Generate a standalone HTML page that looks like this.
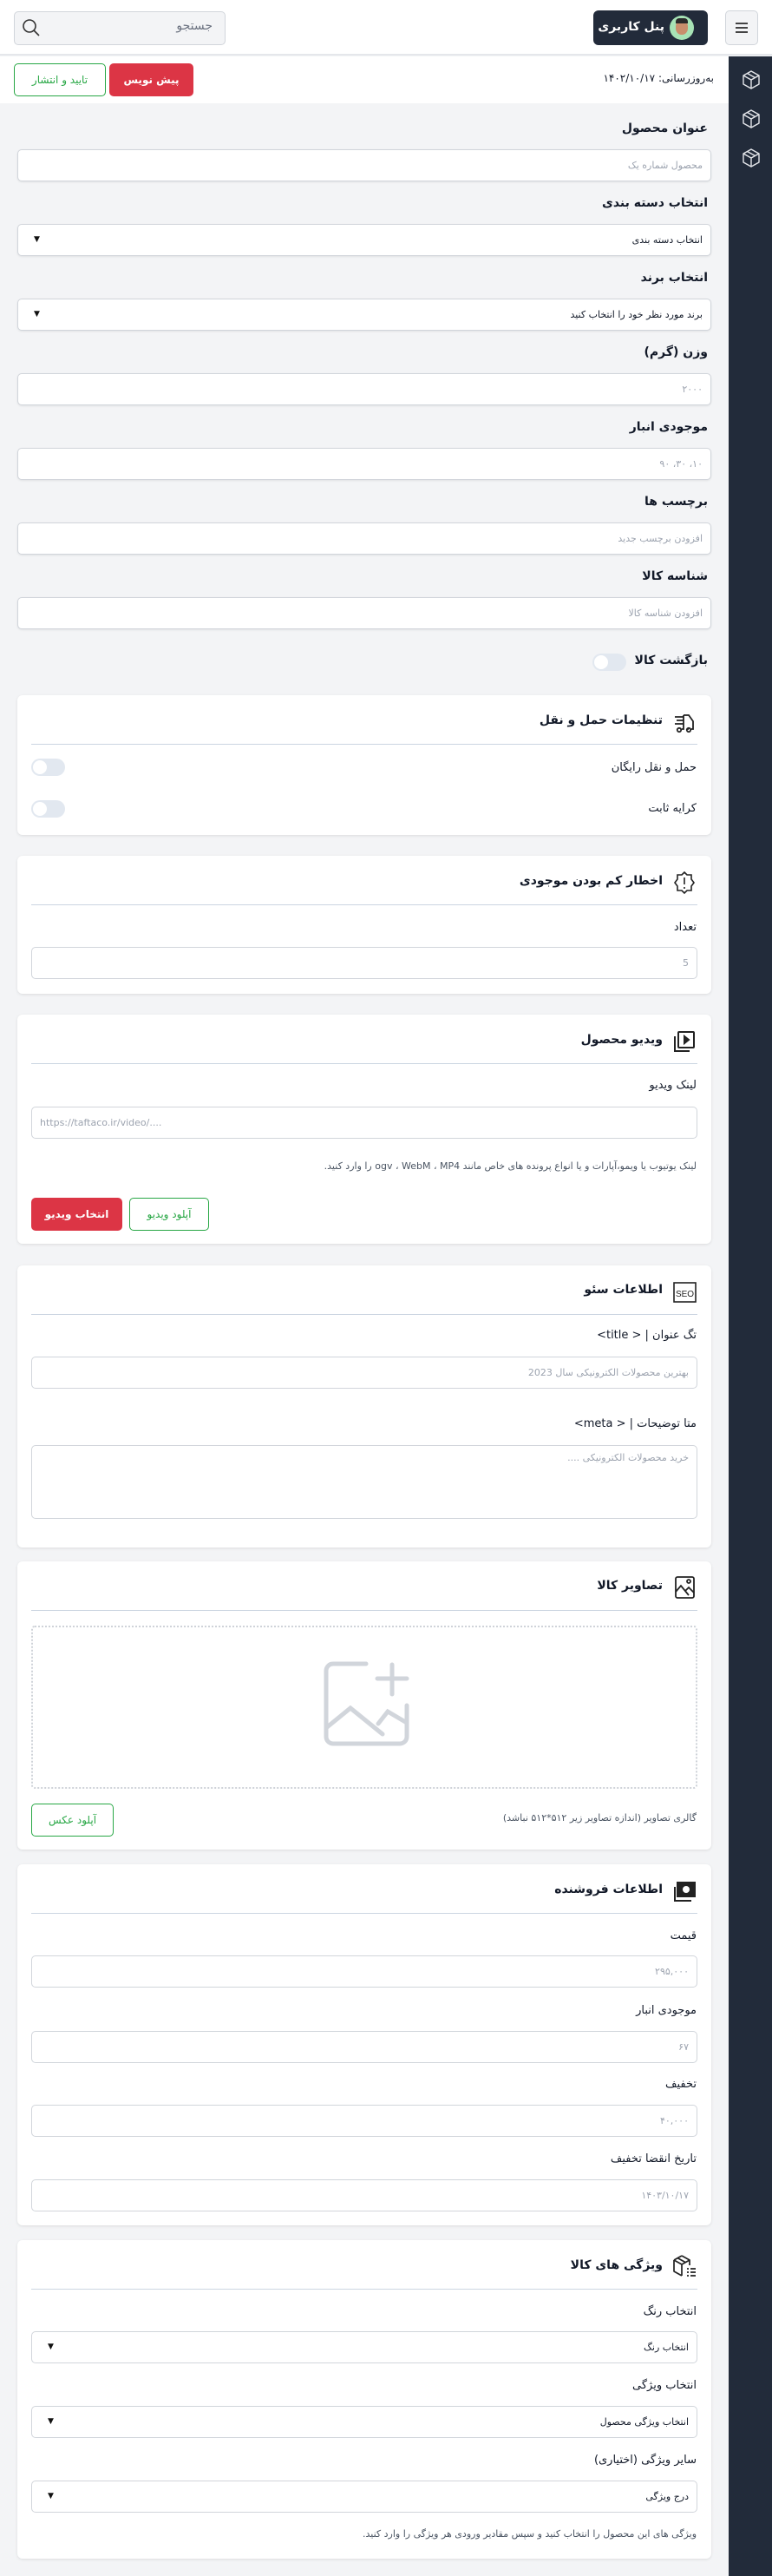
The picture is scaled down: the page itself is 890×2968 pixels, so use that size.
<!DOCTYPE html>
<html lang="fa"><head><meta charset="utf-8">
<style>
*{box-sizing:border-box;margin:0;padding:0}
body{width:890px;height:2968px;position:relative;background:#f3f4f6;font-family:"DejaVu Sans","Liberation Sans",sans-serif;color:#111827;overflow:hidden}
.a{position:absolute}
.hdr{left:0;top:0;width:890px;height:64px;background:#fff;border-bottom:2px solid #e5e7eb}
.side{left:840px;top:65px;width:50px;height:2903px;background:#222b3a}
.bar{left:0;top:65px;width:840px;height:54px;background:#fff}
.lbl{right:74px;font-size:14px;font-weight:bold;direction:rtl;text-align:right;white-space:nowrap}
.lbl2{right:87px;font-size:13px;direction:rtl;text-align:right;white-space:nowrap}
.inp{left:20px;width:800px;height:37px;background:#fff;border:1px solid #d1d5db;border-radius:5px;box-shadow:0 1px 2px rgba(0,0,0,.08);font-size:11px;color:#9ca3af;direction:rtl;padding:0 9px;line-height:35px;text-align:right}
.inp.s{color:#111827}
.inp .ar{position:absolute;left:18px;top:0;font-size:9px;color:#111}
.ci{left:36px;width:768px;height:37px;background:#fff;border:1px solid #d1d5db;border-radius:5px;font-size:11px;color:#9ca3af;direction:rtl;padding:0 9px;line-height:35px;text-align:right}
.ci.s{color:#111827}
.ci .ar{position:absolute;left:18px;top:0;font-size:9px;color:#111}
.card{left:20px;width:800px;background:#fff;border-radius:6px;box-shadow:0 1px 3px rgba(0,0,0,.1)}
.div{left:36px;width:768px;height:1px;background:#cbd5e1}
.ct{right:126px;font-size:14px;font-weight:bold;direction:rtl;white-space:nowrap}
.tg{width:39px;height:20px;border-radius:10px;background:#e2e8f0}
.tg:after{content:"";position:absolute;left:2px;top:2px;width:16px;height:16px;border-radius:50%;background:#fff}
.btnr{background:#dc3545;color:#fff;border-radius:5px;font-size:12px;font-weight:bold;text-align:center;direction:rtl;white-space:nowrap}
.btng{background:#fff;color:#28a745;border:1px solid #28a745;border-radius:5px;font-size:12px;text-align:center;direction:rtl;white-space:nowrap}
.hint{font-size:11px;color:#4b5563;direction:rtl;white-space:nowrap}
.ic{left:774px;width:30px;height:30px}
</style></head><body>
<div class="a hdr"></div>
<div class="a" style="left:16px;top:13px;width:244px;height:39px;background:#f3f4f6;border:1px solid #d1d5db;border-radius:5px"></div>
<svg class="a" style="left:24px;top:20px" width="24" height="24" viewBox="0 0 24 24" fill="none" stroke="#333" stroke-width="1.6"><circle cx="10" cy="10" r="7"/><path d="M15 15l6 6"/></svg>
<div class="a" style="left:150px;top:22px;width:95px;font-size:14px;color:#6b7280;direction:rtl;text-align:right;white-space:nowrap">جستجو</div>
<div class="a" style="left:684px;top:12px;width:132px;height:40px;background:#222b3a;border-radius:6px"></div>
<div class="a" style="left:772px;top:18px;width:28px;height:28px;border-radius:50%;background:#a7e3b5"></div>
<div class="a" style="left:779px;top:23px;width:14px;height:17px;border-radius:45%;background:#c98e6c"></div>
<div class="a" style="left:779px;top:21px;width:14px;height:6px;border-radius:4px 4px 0 0;background:#2b2b2b"></div>
<div class="a" style="right:124px;top:23px;font-size:14px;font-weight:bold;color:#fff;direction:rtl;text-align:right;white-space:nowrap">پنل کاربری</div>
<div class="a" style="left:836px;top:12px;width:38px;height:40px;background:#f3f4f6;border:1px solid #d1d5db;border-radius:5px"></div>
<svg class="a" style="left:845px;top:22px" width="20" height="20" viewBox="0 0 20 20" stroke="#444" stroke-width="2"><path d="M3 5h14M3 10h14M3 15h14"/></svg>

<div class="a bar"></div>
<div class="a side"></div>
<svg class="a" style="left:854px;top:80px" width="24" height="24" viewBox="0 0 24 24" fill="none" stroke="#e5e7eb" stroke-width="1.4" stroke-linejoin="round"><path d="M12 2l9 5v10l-9 5-9-5V7z"/><path d="M3 7l9 5 9-5M12 12v10M7.5 4.5l9 5"/></svg>
<svg class="a" style="left:854px;top:125px" width="24" height="24" viewBox="0 0 24 24" fill="none" stroke="#e5e7eb" stroke-width="1.4" stroke-linejoin="round"><path d="M12 2l9 5v10l-9 5-9-5V7z"/><path d="M3 7l9 5 9-5M12 12v10M7.5 4.5l9 5"/></svg>
<svg class="a" style="left:854px;top:170px" width="24" height="24" viewBox="0 0 24 24" fill="none" stroke="#e5e7eb" stroke-width="1.4" stroke-linejoin="round"><path d="M12 2l9 5v10l-9 5-9-5V7z"/><path d="M3 7l9 5 9-5M12 12v10M7.5 4.5l9 5"/></svg>

<div class="a" style="right:67px;top:83px;font-size:12px;direction:rtl;white-space:nowrap">به‌روزرسانی: ۱۴۰۲/۱۰/۱۷</div>
<div class="a btnr" style="left:126px;top:73px;width:97px;height:38px;line-height:38px">پیش نویس</div>
<div class="a btng" style="left:16px;top:73px;width:106px;height:38px;line-height:36px">تایید و انتشار</div>

<div class="a lbl" style="top:140px">عنوان محصول</div>
<div class="a inp" style="top:172px">محصول شماره یک</div>
<div class="a lbl" style="top:226px">انتخاب دسته بندی</div>
<div class="a inp s" style="top:258px">انتخاب دسته بندی<span class="ar">▼</span></div>
<div class="a lbl" style="top:312px">انتخاب برند</div>
<div class="a inp s" style="top:344px">برند مورد نظر خود را انتخاب کنید<span class="ar">▼</span></div>
<div class="a lbl" style="top:398px">وزن (گرم)</div>
<div class="a inp" style="top:430px">۲۰۰۰</div>
<div class="a lbl" style="top:484px">موجودی انبار</div>
<div class="a inp" style="top:516px">۱۰، ۳۰، ۹۰</div>
<div class="a lbl" style="top:570px">برچسب ها</div>
<div class="a inp" style="top:602px">افزودن برچسب جدید</div>
<div class="a lbl" style="top:656px">شناسه کالا</div>
<div class="a inp" style="top:688px">افزودن شناسه کالا</div>
<div class="a lbl" style="top:753px">بازگشت کالا</div>
<div class="a tg" style="left:683px;top:753px"></div>

<div class="a card" style="top:801px;height:161px"></div>
<svg class="a ic" style="top:818px" viewBox="0 0 30 30" fill="none" stroke="#222" stroke-width="1.8"><path d="M4 8h10M6 12h8M4 16h10M14 6h6l5 7v9h-2M14 6v16h-2M18 22h2"/><circle cx="9" cy="23" r="2.2"/><circle cx="20" cy="23" r="2.2"/></svg>
<div class="a ct" style="top:822px">تنظیمات حمل و نقل</div>
<div class="a div" style="top:857px"></div>
<div class="a lbl2" style="top:877px">حمل و نقل رایگان</div>
<div class="a tg" style="left:36px;top:874px"></div>
<div class="a lbl2" style="top:924px">کرایه ثابت</div>
<div class="a tg" style="left:36px;top:922px"></div>

<div class="a card" style="top:986px;height:159px"></div>
<svg class="a ic" style="top:1002px" viewBox="0 0 30 30" fill="none" stroke="#222" stroke-width="1.6"><path d="M15 3l3 3h5v5l3 4-3 4v5h-5l-3 3-3-3H7v-5l-3-4 3-4V6h5z"/><path d="M15 9v8M15 20v2"/></svg>
<div class="a ct" style="top:1007px">اخطار کم بودن موجودی</div>
<div class="a div" style="top:1042px"></div>
<div class="a lbl2" style="top:1061px">تعداد</div>
<div class="a ci" style="top:1091px">5</div>

<div class="a card" style="top:1169px;height:264px"></div>
<svg class="a ic" style="top:1185px" viewBox="0 0 30 30" fill="none" stroke="#222" stroke-width="2"><rect x="8" y="4" width="18" height="18" rx="1"/><path d="M4 9v17h17"/><path d="M15 9l5 4-5 4z" fill="#222"/></svg>
<div class="a ct" style="top:1190px">ویدیو محصول</div>
<div class="a div" style="top:1225px"></div>
<div class="a lbl2" style="top:1243px">لینک ویدیو</div>
<div class="a ci" style="top:1275px;direction:ltr;text-align:left">https://taftaco.ir/video/....</div>
<div class="a hint" style="right:87px;top:1337px">لینک یوتیوب یا ویمو،آپارات و یا انواع پرونده های خاص مانند ogv ، WebM ، MP4 را وارد کنید.</div>
<div class="a btnr" style="left:36px;top:1380px;width:105px;height:38px;line-height:38px">انتخاب ویدیو</div>
<div class="a btng" style="left:149px;top:1380px;width:92px;height:38px;line-height:36px">آپلود ویدیو</div>

<div class="a card" style="top:1458px;height:325px"></div>
<svg class="a ic" style="top:1474px" viewBox="0 0 30 30" fill="none" stroke="#222" stroke-width="1.6"><rect x="3" y="4" width="25" height="22"/><text x="15.5" y="20" font-size="10" text-anchor="middle" fill="#222" stroke="none" font-family="Liberation Sans">SEO</text></svg>
<div class="a ct" style="top:1478px">اطلاعات سئو</div>
<div class="a div" style="top:1514px"></div>
<div class="a lbl2" style="top:1531px">تگ عنوان | &lt; title&gt;</div>
<div class="a ci" style="top:1563px">بهترین محصولات الکترونیکی سال 2023</div>
<div class="a lbl2" style="top:1633px">متا توضیحات | &lt; meta&gt;</div>
<div class="a ci" style="top:1665px;height:85px;line-height:28px">خرید محصولات الکترونیکی ....</div>

<div class="a card" style="top:1799px;height:332px"></div>
<svg class="a ic" style="top:1814px" viewBox="0 0 30 30" fill="none" stroke="#222" stroke-width="1.8"><rect x="5" y="3" width="21" height="24" rx="2"/><path d="M5 20l6-7 9 11M16 19l4-4 6 6"/><circle cx="20" cy="8" r="2"/></svg>
<div class="a ct" style="top:1819px">تصاویر کالا</div>
<div class="a div" style="top:1855px"></div>
<div class="a" style="left:36px;top:1873px;width:768px;height:188px;border:2px dotted #cfd3d9;border-radius:4px"></div>
<svg class="a" style="left:340px;top:1880px" width="160" height="160" viewBox="0 0 160 160" fill="none" stroke="#d1d5db" stroke-width="5" stroke-linecap="round"><path d="M82 37H44a8 8 0 0 0-8 8v76a8 8 0 0 0 8 8h77a8 8 0 0 0 8-8V85"/><path d="M112 38v34M95 54h34"/><path d="M37 110l27-22 37 30M96 106l11-14 22 13"/></svg>
<div class="a hint" style="right:87px;top:2088px">گالری تصاویر (اندازه تصاویر زیر ۵۱۲*۵۱۲ نباشد)</div>
<div class="a btng" style="left:36px;top:2078px;width:95px;height:38px;line-height:36px">آپلود عکس</div>

<div class="a card" style="top:2148px;height:416px"></div>
<svg class="a ic" style="top:2164px" viewBox="0 0 30 30" fill="none" stroke="#222" stroke-width="2"><rect x="7" y="5" width="20" height="16" fill="#222"/><circle cx="17" cy="13" r="4" fill="#fff" stroke="none"/><path d="M4 10v16h19"/></svg>
<div class="a ct" style="top:2169px">اطلاعات فروشنده</div>
<div class="a div" style="top:2204px"></div>
<div class="a lbl2" style="top:2223px">قیمت</div>
<div class="a ci" style="top:2253px">۲۹۵,۰۰۰</div>
<div class="a lbl2" style="top:2309px">موجودی انبار</div>
<div class="a ci" style="top:2340px">۶۷</div>
<div class="a lbl2" style="top:2394px">تخفیف</div>
<div class="a ci" style="top:2425px">۴۰,۰۰۰</div>
<div class="a lbl2" style="top:2480px">تاریخ انقضا تخفیف</div>
<div class="a ci" style="top:2511px">۱۴۰۳/۱۰/۱۷</div>

<div class="a card" style="top:2581px;height:367px"></div>
<svg class="a ic" style="top:2597px" viewBox="0 0 30 30" fill="none" stroke="#222" stroke-width="1.7" stroke-linejoin="round"><path d="M12 2l9 5v6M3 7v13l9 5M3 7l9-5M3 7l9 5 9-5M12 12v13M7 4.5l9 5"/><path d="M18 17h2M22 17h6M18 21h2M22 21h6M18 25h2M22 25h6"/></svg>
<div class="a ct" style="top:2602px">ویژگی های کالا</div>
<div class="a div" style="top:2637px"></div>
<div class="a lbl2" style="top:2656px">انتخاب رنگ</div>
<div class="a ci s" style="top:2686px">انتخاب رنگ<span class="ar">▼</span></div>
<div class="a lbl2" style="top:2741px">انتخاب ویژگی</div>
<div class="a ci s" style="top:2772px">انتخاب ویژگی محصول<span class="ar">▼</span></div>
<div class="a lbl2" style="top:2827px">سایر ویژگی (اختیاری)</div>
<div class="a ci s" style="top:2858px">درج ویژگی<span class="ar">▼</span></div>
<div class="a hint" style="right:87px;top:2913px">ویژگی های این محصول را انتخاب کنید و سپس مقادیر ورودی هر ویژگی را وارد کنید.</div>
</body></html>
